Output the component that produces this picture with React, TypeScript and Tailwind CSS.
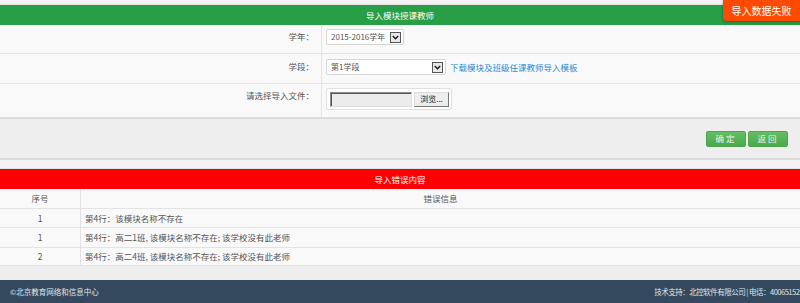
import React from "react";

const font = { fontFamily: '"Microsoft YaHei","Noto Sans CJK SC","Liberation Sans",sans-serif' };

function Chevron() {
  return (
    <span className="flex h-[11px] w-[11px] shrink-0 items-center justify-center border border-[#555] bg-[#e8e8e8]">
      <svg width="7" height="5" viewBox="0 0 7 5">
        <path d="M0.8 1 L3.5 3.8 L6.2 1" fill="none" stroke="#111" strokeWidth="1.3" />
      </svg>
    </span>
  );
}

function FakeSelect({ text, w }: { text: string; w: string }) {
  return (
    <div className={`flex h-[16px] items-center justify-between whitespace-nowrap rounded-[2px] border border-[#d5d5d5] bg-white pl-[4px] pr-[2px] text-[8px] text-[#555] ${w}`}>
      <span>{text}</span>
      <Chevron />
    </div>
  );
}

export default function App() {
  const rows = [
    { n: "1", msg: "第4行：该模块名称不存在", h: "h-[19px]" },
    { n: "1", msg: "第4行：高二1班, 该模块名称不存在; 该学校没有此老师", h: "h-[20px]" },
    { n: "2", msg: "第4行：高二4班, 该模块名称不存在; 该学校没有此老师", h: "h-[18px]" },
  ];
  return (
    <div className="relative h-[303px] w-[800px] overflow-hidden bg-[#f0f0f0]" style={font}>
      {/* top strip */}
      <div className="h-[5px] border-b border-[#e2e2e2] bg-[#f2f2f2]" />
      {/* green header */}
      <div className="flex h-[20px] items-center justify-center bg-[#289f46] text-[8.5px] text-white">
        导入模块授课教师
      </div>
      {/* form */}
      <div className="bg-[#f9f9f9] text-[8.5px] text-[#555]">
        <div className="flex h-[29px] border-b border-[#e3e3e3]">
          <div className="w-[322px] border-r border-[#e3e3e3] pr-[7px] pt-[5px] text-right">学年：</div>
          <div className="pl-[4px] pt-[4px]">
            <FakeSelect text="2015-2016学年" w="w-[78px]" />
          </div>
        </div>
        <div className="flex h-[30px] border-b border-[#e3e3e3]">
          <div className="w-[322px] border-r border-[#e3e3e3] pr-[7px] pt-[6px] text-right">学段：</div>
          <div className="flex items-start gap-[4px] pl-[4px] pt-[5px]">
            <FakeSelect text="第1学段" w="w-[120px]" />
            <a className="whitespace-nowrap pt-[2px] text-[8.5px] text-[#2b8ad6]">下载模块及班级任课教师导入模板</a>
          </div>
        </div>
        <div className="flex h-[35px] border-b-2 border-[#dcdcdc]">
          <div className="w-[322px] border-r border-[#e3e3e3] pr-[7px] pt-[5px] text-right">请选择导入文件：</div>
          <div className="pl-[4px] pt-[4px]">
            <div className="flex h-[22px] w-[126px] items-center gap-[2px] rounded-[2px] border border-[#e0e0e0] bg-white pl-[3px]">
              <div className="h-[15px] w-[82px] border border-[#8a8a8a] border-r-[#ddd] border-b-[#ddd] bg-[#ececec] shadow-[inset_1px_1px_0_#555]" />
              <div className="flex h-[15px] w-[35px] items-center justify-center border border-[#ddd] border-r-[#777] border-b-[#777] bg-[#eeeeee] text-[8px] text-[#222]">
                浏览...
              </div>
            </div>
          </div>
        </div>
      </div>
      {/* gray action area */}
      <div className="flex h-[41px] items-center justify-end gap-[2px] border-b-2 border-[#dcdcdc] bg-[#eeeeee] pr-[12px]">
        <div className="flex h-[16px] w-[40px] items-center justify-center rounded-[2px] border border-[#4ea54e] bg-gradient-to-b from-[#64be64] to-[#4aa94a] text-[8.5px] tracking-[2px] text-[#f0f0f0]">
          确定
        </div>
        <div className="flex h-[16px] w-[40px] items-center justify-center rounded-[2px] border border-[#4ea54e] bg-gradient-to-b from-[#64be64] to-[#4aa94a] text-[8.5px] tracking-[2px] text-[#f0f0f0]">
          返回
        </div>
      </div>
      <div className="h-[9px] border-b border-[#d8e4e8] bg-[#f3f3f3]" />
      {/* red header */}
      <div className="flex h-[20px] items-center justify-center bg-[#ff0000] text-[8.5px] text-white">
        导入错误内容
      </div>
      {/* table */}
      <div className="bg-[#f9f9f9] text-[8.5px] text-[#555]">
        <div className="flex h-[20px] border-b border-[#e3e3e3]">
          <div className="flex w-[81px] items-center justify-center border-r border-[#e3e3e3]">序号</div>
          <div className="flex flex-1 items-center justify-center">错误信息</div>
        </div>
        {rows.map((r, i) => (
          <div key={i} className={`flex ${r.h} border-b border-[#e3e3e3]`}>
            <div className="flex w-[81px] items-center justify-center border-r border-[#e3e3e3]">{r.n}</div>
            <div className="flex flex-1 items-center pl-[4px]">{r.msg}</div>
          </div>
        ))}
      </div>
      <div className="h-[14px] bg-[#eeeeee]" />
      {/* footer */}
      <div className="flex h-[23px] items-center whitespace-nowrap bg-[#34495e] pl-[10px] text-[7.5px] text-[#dfe5ea]">
        <span>©北京教育网络和信息中心</span>
        <span className="ml-auto -mr-[3px] tracking-[-0.5px]">技术支持：北控软件有限公司 | 电话：400651525</span>
      </div>
      {/* toast */}
      <div className="absolute right-[-6px] top-0 flex h-[21px] w-[83px] items-center justify-center rounded-bl-[4px] rounded-br-[4px] bg-[#ff4a02] pr-[6px] text-[10px] text-white shadow-[0_1px_3px_rgba(0,0,0,0.35)]">
        导入数据失败
      </div>
    </div>
  );
}
